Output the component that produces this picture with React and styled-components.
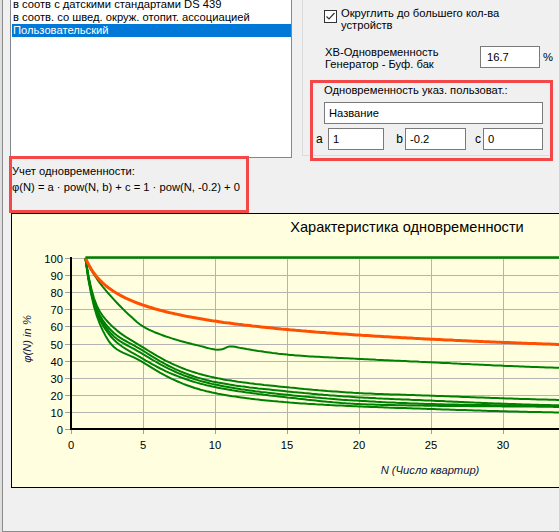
import React from 'react';
import styled, { createGlobalStyle } from 'styled-components';

const GlobalStyle = createGlobalStyle`
  html, body {
    margin: 0;
    padding: 0;
    background: #f0f0f0;
  }
  body {
    font-family: "Liberation Sans", Arial, sans-serif;
    font-size: 11.2px;
    color: #000;
  }
`;

const Window = styled.div`
  width: 559px;
  height: 532px;
  overflow: hidden;
  box-sizing: border-box;
  border-left: 2px solid #dedede;
  background: #f0f0f0;
`;

const Body = styled.div`
  height: 100%;
  box-sizing: border-box;
  border-left: 1px solid #8c8c8c;
  border-bottom: 1px solid #8c8c8c;
  display: flex;
  flex-direction: column;
  align-items: flex-start;
`;

const TopRow = styled.div`
  display: flex;
  align-items: flex-start;
  margin-top: -4px;
  padding-left: 7px;
`;

const ListBox = styled.div`
  width: 282px;
  height: 162px;
  box-sizing: border-box;
  border: 1px solid #828790;
  background: #fff;
  padding-top: 1px;
  flex-shrink: 0;
`;

const ListItem = styled.div`
  height: 13px;
  line-height: 13px;
  margin-left: 1px;
  padding-left: 1px;
  white-space: nowrap;
  background: ${(p) => (p.$selected ? '#0078d7' : 'transparent')};
  color: ${(p) => (p.$selected ? '#fff' : '#000')};
`;

const GroupBox = styled.div`
  margin-left: 10px;
  width: 251px;
  height: 160px;
  box-sizing: border-box;
  border-top: 1px solid #dcdcdc;
  border-left: 1px solid #dcdcdc;
  border-bottom: 1px solid #dcdcdc;
  padding: 10px 0 0 7px;
  display: flex;
  flex-direction: column;
  flex-shrink: 0;
`;

const CheckRow = styled.label`
  display: flex;
  align-items: flex-start;
  gap: 4px;
  margin-left: 14px;
  line-height: 12px;
`;

const CheckBox = styled.span`
  width: 13px;
  height: 13px;
  box-sizing: border-box;
  border: 1px solid #333;
  background: #fff;
  margin-top: 3px;
  flex-shrink: 0;
  display: flex;
  align-items: center;
  justify-content: center;
`;

const FieldRow = styled.div`
  display: flex;
  align-items: flex-start;
  margin: 15px 0 0 15px;
`;

const FieldLabel = styled.div`
  width: 158px;
  line-height: 12px;
`;

const TextBox = styled.div`
  width: ${(p) => p.$w}px;
  height: 22px;
  box-sizing: border-box;
  border: 1px solid #7a7a7a;
  background: #fff;
  padding-left: ${(p) => p.$pad ?? 4}px;
  line-height: 20px;
  white-space: nowrap;
  flex-shrink: 0;
`;

const Unit = styled.span`
  margin-left: 3px;
  line-height: 22px;
`;

const Highlight = styled.div`
  box-sizing: border-box;
  border: 3px solid #f44848;
  flex-shrink: 0;
`;

const UserBox = styled(Highlight)`
  width: 243px;
  height: 81px;
  margin-top: 10px;
  padding: 1px 0 0 11px;
`;

const UserTitle = styled.div`
  line-height: 12px;
`;

const NameBox = styled(TextBox)`
  margin-top: 6px;
`;

const ParamRow = styled.div`
  display: flex;
  align-items: center;
  margin: 4px 0 0 -8px;
`;

const ParamLabel = styled.span`
  width: ${(p) => p.$w}px;
  box-sizing: border-box;
  text-align: ${(p) => (p.$left ? 'left' : 'right')};
  padding-right: ${(p) => (p.$left ? 0 : 2)}px;
  font-size: 12px;
`;

const FormulaBox = styled(Highlight)`
  width: 240px;
  height: 57px;
  margin: -2px 0 0 6px;
  padding-top: 4px;
  line-height: 16px;
  white-space: nowrap;
`;

const ChartBox = styled.div`
  width: 792px;
  height: 275px;
  margin-left: 8px;
  box-sizing: border-box;
  border: 1px solid #000;
  background: #ffffe0;
  flex-shrink: 0;
  display: flex;
  flex-direction: column;
`;

const ChartTitle = styled.div`
  height: 26px;
  line-height: 26px;
  text-align: center;
  font-size: 14.6px;
`;

const Plot = styled.svg`
  display: block;
  width: 790px;
  height: 246px;
`;

const TickLabel = styled.text`
  font-family: "Liberation Sans", Arial, sans-serif;
  font-size: 11.2px;
  fill: #000;
`;

const AxisTitle = styled(TickLabel)`
  font-style: italic;
  fill: #14143c;
`;

const X = (n) => 71 + 14.4 * n;
const Y = (v) => 429 - 1.71 * v;

// smooth curve through the nodes, interpolated in log-log space
const curvePoints = (nodes, step = 0.2, to = 50) => {
  const u = nodes.map(([n]) => Math.log(n));
  const w = nodes.map(([, v]) => Math.log(v));
  const d = u.slice(0, -1).map((_, k) => (w[k + 1] - w[k]) / (u[k + 1] - u[k]));
  const m = u.map((_, k) => (k === 0 ? d[0] : k === u.length - 1 ? d[k - 1] : (d[k - 1] + d[k]) / 2));
  const out = [];
  for (let n = 1; n <= to + 1e-6; n += step) {
    const un = Math.log(n);
    let i = 0;
    while (i < u.length - 2 && un > u[i + 1]) i++;
    const h = u[i + 1] - u[i];
    const t = (un - u[i]) / h;
    const t2 = t * t;
    const t3 = t2 * t;
    const wn =
      (2 * t3 - 3 * t2 + 1) * w[i] +
      (t3 - 2 * t2 + t) * h * m[i] +
      (-2 * t3 + 3 * t2) * w[i + 1] +
      (t3 - t2) * h * m[i + 1];
    out.push(`${X(n).toFixed(1)},${Y(Math.exp(wn)).toFixed(1)}`);
  }
  return out.join(' ');
};

const clusterCurves = [
  [[1, 100], [1.8, 72], [3, 59], [5, 47.7], [10, 30], [15, 24.4], [20, 21], [25, 19.5], [33, 17.2], [50, 15]],
  [[1, 100], [1.8, 70], [3, 56], [5, 45.8], [10, 27.5], [15, 22], [20, 18.5], [25, 16.6], [33, 14], [50, 12.2]],
  [[1, 100], [1.8, 69], [3, 54], [5, 43.8], [10, 26], [15, 20], [20, 16.5], [25, 14.6], [33, 13.5], [50, 11.8]],
  [[1, 100], [1.8, 68], [3, 52], [5, 41], [10, 24.5], [15, 18.5], [20, 14.6], [25, 13.6], [33, 13], [50, 11.2]],
  [[1, 100], [2, 61.5], [2.9, 48.6], [5, 39], [10, 21], [15, 15.6], [20, 13.2], [25, 11.7], [33, 9.8], [50, 8.4]],
];

const swedishCurve = [
  [1, 100], [2, 85.5], [3, 75.5], [4, 67], [5, 60], [7, 53], [9, 48.5],
  [10, 46.5], [10.5, 46.6], [11, 48.3], [12, 47], [15, 43.5], [20, 41], [25, 39], [33, 36], [50, 32.5],
];

const userCurve = [[1, 100], [50, 100 * Math.pow(50, -0.2)]];

const yTicks = [0, 10, 20, 30, 40, 50, 60, 70, 80, 90, 100];
const xGrid = [0, 5, 10, 15, 20, 25, 30, 35, 40, 45, 50];
const xLabels = [0, 5, 10, 15, 20, 25, 30];

const Check = () => (
  <svg width="11" height="11" viewBox="0 0 11 11">
    <path d="M1.5 5.5 L4 8 L9.5 2" fill="none" stroke="#333" strokeWidth="1.2" />
  </svg>
);

const Chart = () => (
  <ChartBox>
    <ChartTitle>Характеристика одновременности</ChartTitle>
    <Plot>
      <g transform="translate(-12 -240)">
        {yTicks.map((v) => {
          const y = Math.round(Y(v)) + 0.5;
          return (
            <g key={v}>
              {v > 0 && <line x1={71} x2={820} y1={y} y2={y} stroke="#b4b4b4" />}
              <line x1={65} x2={71} y1={y} y2={y} stroke="#a0a0a0" />
              <TickLabel x={63} y={y + 4} textAnchor="end">{v}</TickLabel>
            </g>
          );
        })}
        {xGrid.map((n) => {
          const x = Math.round(X(n)) + 0.5;
          return (
            <g key={n}>
              {n > 0 && <line x1={x} x2={x} y1={258} y2={429} stroke="#b4b4b4" />}
              <line x1={x} x2={x} y1={429} y2={434} stroke="#a0a0a0" />
            </g>
          );
        })}
        {xLabels.map((n) => (
          <TickLabel key={n} x={X(n)} y={449} textAnchor="middle">{n}</TickLabel>
        ))}
        <line x1={71} x2={71} y1={257} y2={430} stroke="#000" strokeWidth="2" />
        <line x1={70} x2={820} y1={429} y2={429} stroke="#000" strokeWidth="2" />
        {clusterCurves.map((c, i) => (
          <polyline key={i} points={curvePoints(c)} fill="none" stroke="#008000" strokeWidth="2" strokeLinejoin="round" />
        ))}
        <polyline points={curvePoints(swedishCurve)} fill="none" stroke="#008000" strokeWidth="2" strokeLinejoin="round" />
        <polyline points={curvePoints(userCurve)} fill="none" stroke="#ff5000" strokeWidth="3" strokeLinejoin="round" />
        <line x1={X(1)} x2={820} y1={257.5} y2={257.5} stroke="#008000" strokeWidth="2.5" />
        <AxisTitle x={31} y={339} textAnchor="middle" transform="rotate(-90 31 339)">φ(N) in %</AxisTitle>
        <AxisTitle x={430} y={474} textAnchor="middle">N (Число квартир)</AxisTitle>
      </g>
    </Plot>
  </ChartBox>
);

const items = [
  'в соотв с датскими стандартами DS 439',
  'в соотв. со швед. окруж. отопит. ассоциацией',
  'Пользовательский',
];

export default function App() {
  return (
    <Window>
      <GlobalStyle />
      <Body>
        <TopRow>
          <ListBox>
            {items.map((t, i) => (
              <ListItem key={t} $selected={i === items.length - 1}>{t}</ListItem>
            ))}
          </ListBox>
          <GroupBox>
            <CheckRow>
              <CheckBox><Check /></CheckBox>
              <span>Округлить до большего кол-ва<br />устройств</span>
            </CheckRow>
            <FieldRow>
              <FieldLabel>ХВ-Одновременность<br />Генератор - Буф. бак</FieldLabel>
              <TextBox $w={60} $pad={6}>16.7</TextBox>
              <Unit>%</Unit>
            </FieldRow>
            <UserBox>
              <UserTitle>Одновременность указ. пользоват.:</UserTitle>
              <NameBox $w={219}>Название</NameBox>
              <ParamRow>
                <ParamLabel $w={12} $left>a</ParamLabel>
                <TextBox $w={56}>1</TextBox>
                <ParamLabel $w={21}>b</ParamLabel>
                <TextBox $w={61}>-0.2</TextBox>
                <ParamLabel $w={17}>c</ParamLabel>
                <TextBox $w={60}>0</TextBox>
              </ParamRow>
            </UserBox>
          </GroupBox>
        </TopRow>
        <FormulaBox>
          Учет одновременности:
          <br />
          φ(N) = a · pow(N, b) + c = 1 · pow(N, -0.2) + 0
        </FormulaBox>
        <Chart />
      </Body>
    </Window>
  );
}
